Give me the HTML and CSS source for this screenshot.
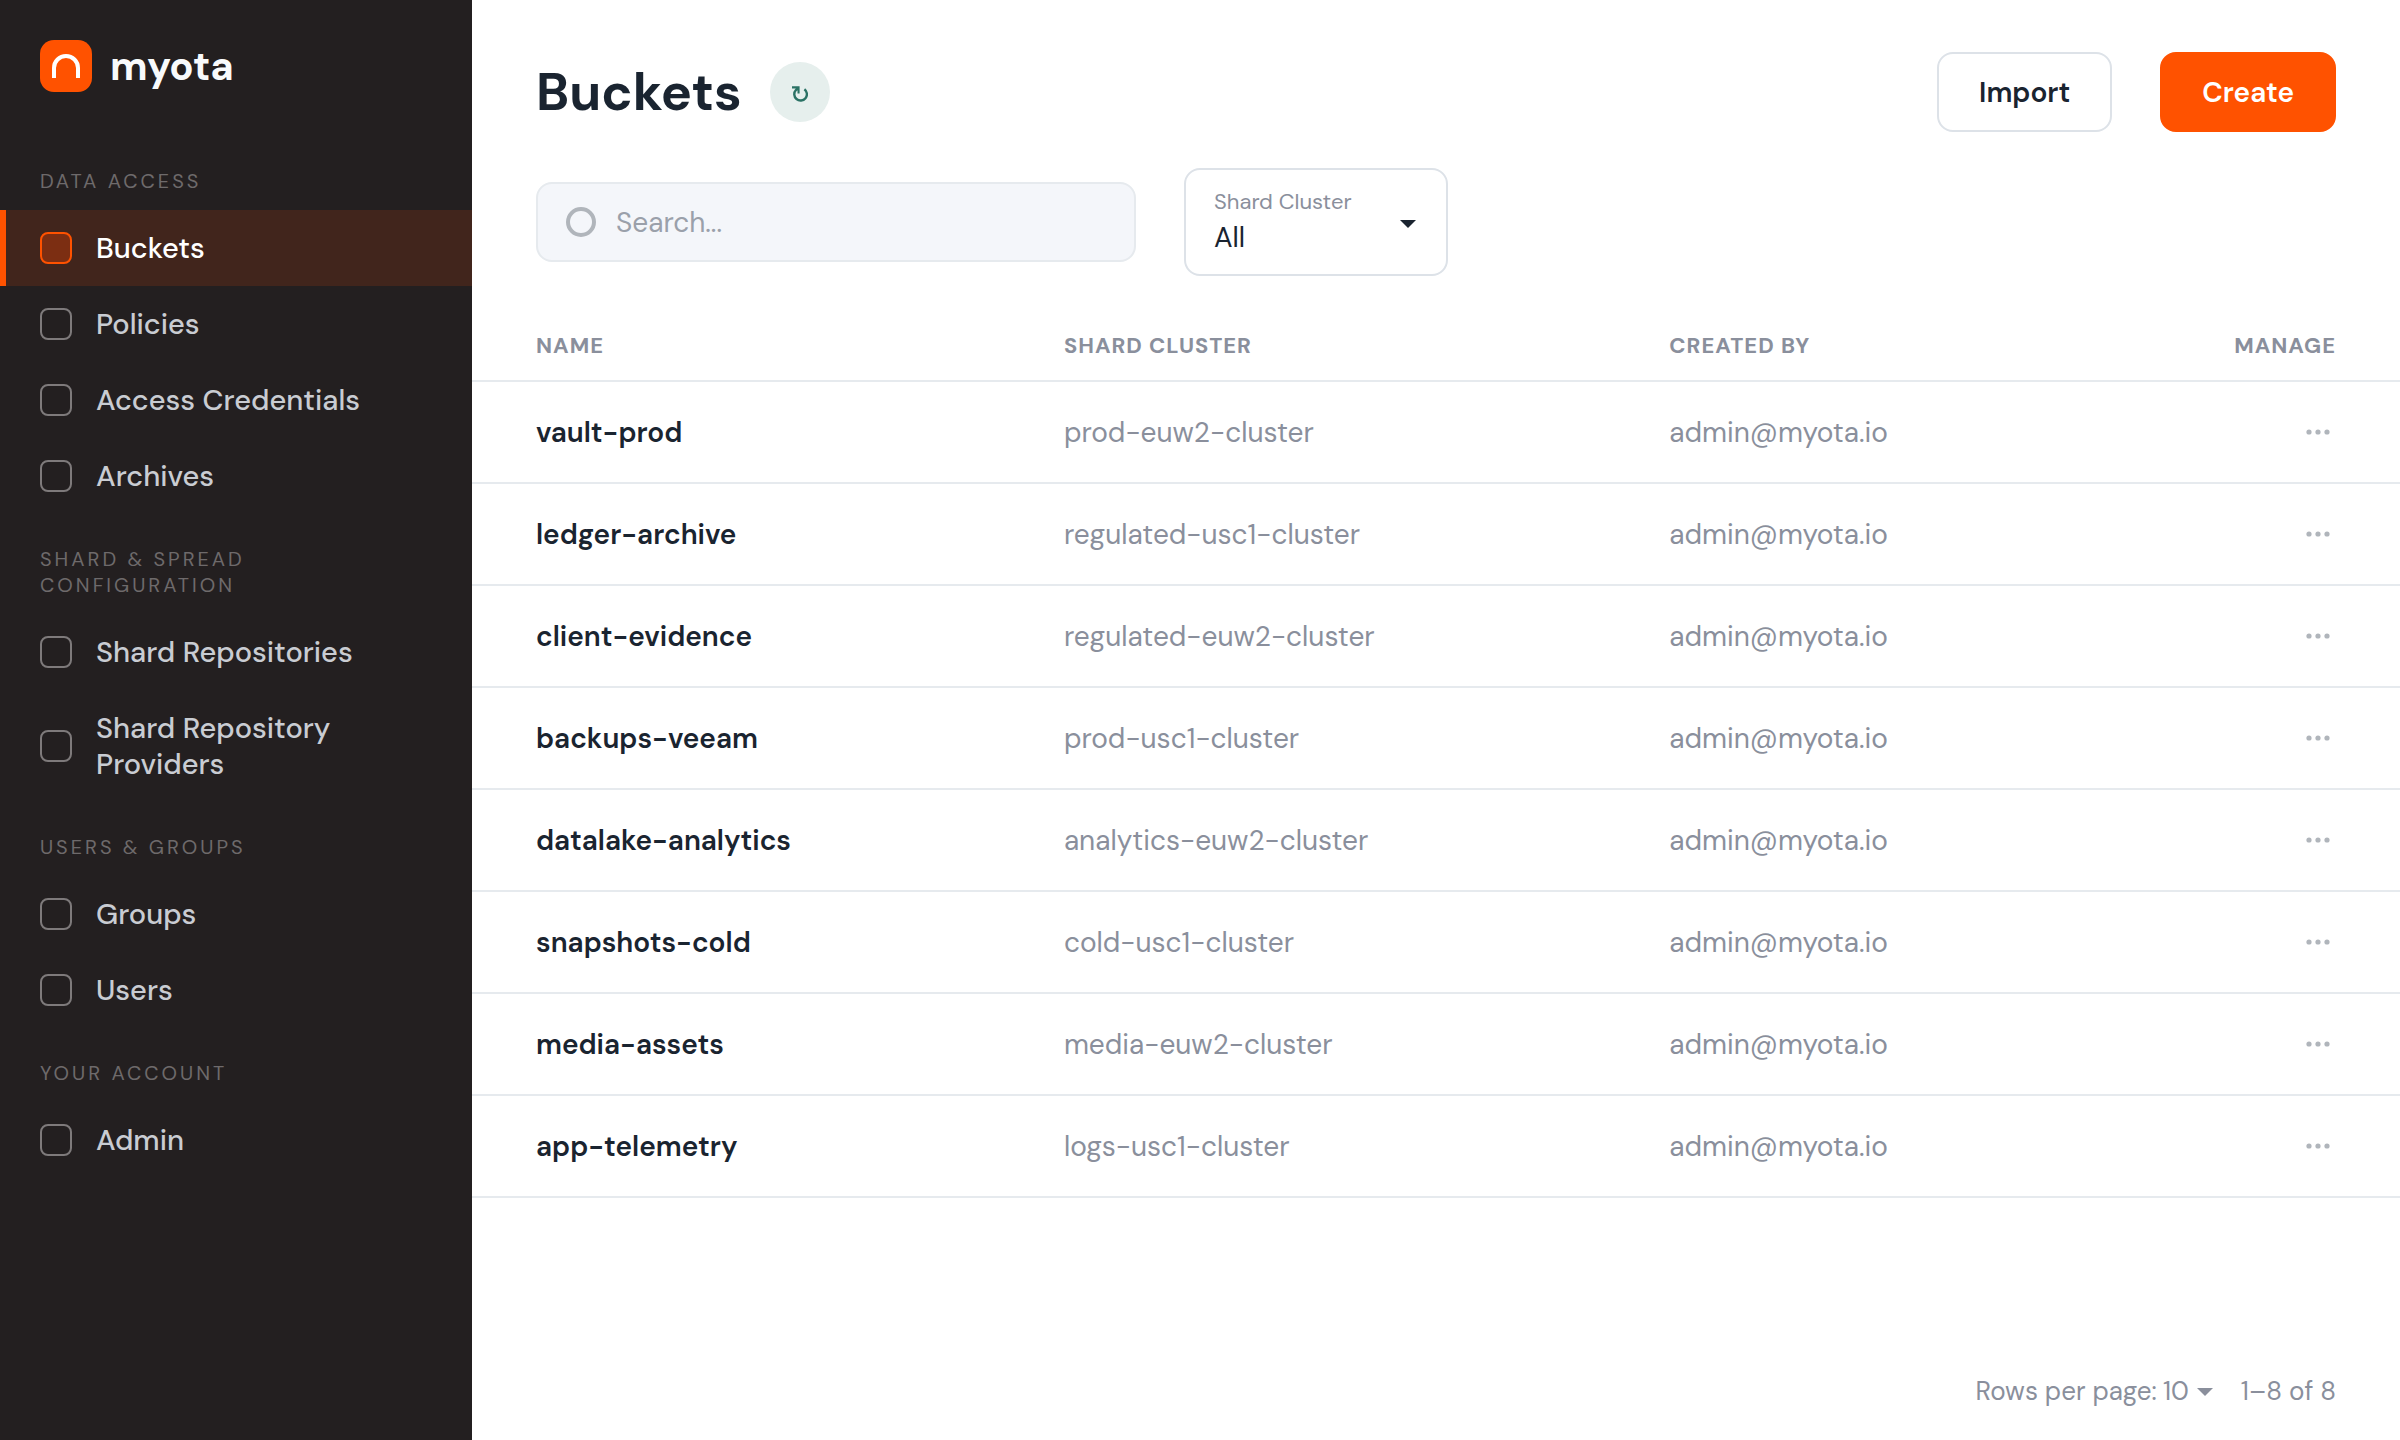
FILE: index.html
```html
<!DOCTYPE html>
<html lang="en">
<head>
  <meta charset="utf-8">
  <meta name="viewport" content="width=device-width, initial-scale=1">
  <title>Buckets – myota</title>
  <link rel="stylesheet" href="styles.css">
</head>
<body>
<div class="app">
  <aside class="sidebar">
    <a class="brand" href="#">
      <svg class="brand-mark" viewBox="0 0 52 52" aria-hidden="true">
        <rect width="52" height="52" rx="14" fill="#ff5200"/>
        <path d="M14 38V28a12 12 0 0 1 24 0v10" fill="none" stroke="#fff" stroke-width="4"/>
      </svg>
      <span class="brand-name">myota</span>
    </a>
    <nav class="nav" aria-label="Main">
      <h2 class="nav-heading">Data Access</h2>
      <a class="nav-item active" href="#" aria-current="page"><span class="nav-icon"></span><span>Buckets</span></a>
      <a class="nav-item" href="#"><span class="nav-icon"></span><span>Policies</span></a>
      <a class="nav-item" href="#"><span class="nav-icon"></span><span>Access Credentials</span></a>
      <a class="nav-item" href="#"><span class="nav-icon"></span><span>Archives</span></a>
      <h2 class="nav-heading">Shard &amp; Spread Configuration</h2>
      <a class="nav-item" href="#"><span class="nav-icon"></span><span>Shard Repositories</span></a>
      <a class="nav-item" href="#"><span class="nav-icon"></span><span>Shard Repository Providers</span></a>
      <h2 class="nav-heading">Users &amp; Groups</h2>
      <a class="nav-item" href="#"><span class="nav-icon"></span><span>Groups</span></a>
      <a class="nav-item" href="#"><span class="nav-icon"></span><span>Users</span></a>
      <h2 class="nav-heading">Your Account</h2>
      <a class="nav-item" href="#"><span class="nav-icon"></span><span>Admin</span></a>
    </nav>
  </aside>

  <main class="main">
    <header class="page-header">
      <h1 class="title">Buckets</h1>
      <button class="refresh" type="button" aria-label="Refresh">
        <svg class="refresh-icon" viewBox="0 0 16 16" aria-hidden="true">
          <path d="M12.4 3.2A6.3 6.3 0 1 1 3.9 4l2.4-2" fill="none" stroke="#2b7265" stroke-width="2.4"/>
          <path d="M0 .3h7.6v7.2H5.5V4.6L3.4 2.6H0z" fill="#2b7265"/>
        </svg>
      </button>
      <div class="actions">
        <button class="btn btn-outline" type="button">Import</button>
        <button class="btn btn-primary" type="button">Create</button>
      </div>
    </header>

    <div class="toolbar">
      <label class="search">
        <span class="search-icon"></span>
        <input class="search-input" type="search" placeholder="Search..." aria-label="Search">
      </label>
      <div class="filter">
        <label class="filter-label" for="cluster">Shard Cluster</label>
        <select class="filter-select" id="cluster"><option>All</option></select>
        <svg class="filter-caret" viewBox="0 0 16 8" aria-hidden="true"><path d="M0 0h16L8 8z" fill="#1a2430"/></svg>
      </div>
    </div>

    <table class="table">
      <thead>
        <tr><th class="col-name">Name</th><th class="col-cluster">Shard Cluster</th><th>Created By</th><th class="col-manage">Manage</th></tr>
      </thead>
      <tbody>
        <tr><td class="name">vault-prod</td><td>prod-euw2-cluster</td><td>admin@myota.io</td><td class="col-manage"><button class="more" type="button" aria-label="Manage vault-prod"><svg class="dots" viewBox="0 0 24 6"><circle cx="3" cy="3" r="2.6"/><circle cx="12" cy="3" r="2.6"/><circle cx="21" cy="3" r="2.6"/></svg></button></td></tr>
        <tr><td class="name">ledger-archive</td><td>regulated-usc1-cluster</td><td>admin@myota.io</td><td class="col-manage"><button class="more" type="button" aria-label="Manage ledger-archive"><svg class="dots" viewBox="0 0 24 6"><circle cx="3" cy="3" r="2.6"/><circle cx="12" cy="3" r="2.6"/><circle cx="21" cy="3" r="2.6"/></svg></button></td></tr>
        <tr><td class="name">client-evidence</td><td>regulated-euw2-cluster</td><td>admin@myota.io</td><td class="col-manage"><button class="more" type="button" aria-label="Manage client-evidence"><svg class="dots" viewBox="0 0 24 6"><circle cx="3" cy="3" r="2.6"/><circle cx="12" cy="3" r="2.6"/><circle cx="21" cy="3" r="2.6"/></svg></button></td></tr>
        <tr><td class="name">backups-veeam</td><td>prod-usc1-cluster</td><td>admin@myota.io</td><td class="col-manage"><button class="more" type="button" aria-label="Manage backups-veeam"><svg class="dots" viewBox="0 0 24 6"><circle cx="3" cy="3" r="2.6"/><circle cx="12" cy="3" r="2.6"/><circle cx="21" cy="3" r="2.6"/></svg></button></td></tr>
        <tr><td class="name">datalake-analytics</td><td>analytics-euw2-cluster</td><td>admin@myota.io</td><td class="col-manage"><button class="more" type="button" aria-label="Manage datalake-analytics"><svg class="dots" viewBox="0 0 24 6"><circle cx="3" cy="3" r="2.6"/><circle cx="12" cy="3" r="2.6"/><circle cx="21" cy="3" r="2.6"/></svg></button></td></tr>
        <tr><td class="name">snapshots-cold</td><td>cold-usc1-cluster</td><td>admin@myota.io</td><td class="col-manage"><button class="more" type="button" aria-label="Manage snapshots-cold"><svg class="dots" viewBox="0 0 24 6"><circle cx="3" cy="3" r="2.6"/><circle cx="12" cy="3" r="2.6"/><circle cx="21" cy="3" r="2.6"/></svg></button></td></tr>
        <tr><td class="name">media-assets</td><td>media-euw2-cluster</td><td>admin@myota.io</td><td class="col-manage"><button class="more" type="button" aria-label="Manage media-assets"><svg class="dots" viewBox="0 0 24 6"><circle cx="3" cy="3" r="2.6"/><circle cx="12" cy="3" r="2.6"/><circle cx="21" cy="3" r="2.6"/></svg></button></td></tr>
        <tr><td class="name">app-telemetry</td><td>logs-usc1-cluster</td><td>admin@myota.io</td><td class="col-manage"><button class="more" type="button" aria-label="Manage app-telemetry"><svg class="dots" viewBox="0 0 24 6"><circle cx="3" cy="3" r="2.6"/><circle cx="12" cy="3" r="2.6"/><circle cx="21" cy="3" r="2.6"/></svg></button></td></tr>
      </tbody>
    </table>

    <footer class="pager">
      <div class="page-size">
        <label for="rows">Rows per page:</label>
        <select class="page-select" id="rows"><option>10</option></select>
        <svg class="page-caret" viewBox="0 0 16 8" aria-hidden="true"><path d="M0 0h16L8 8z" fill="#8a8f9c"/></svg>
      </div>
      <span>1–8 of 8</span>
    </footer>
  </main>
</div>
</body>
</html>
```
FILE: styles.css
```css
:root {
  --ink: #1a2430;
  --muted: #8a8f9c;
  --line: #e6eaee;
  --accent: #ff5200;
}

* { box-sizing: border-box; }

body {
  margin: 0;
  background: #fff;
  color: var(--ink);
  font-family: "DM Sans", Inter, "Liberation Sans", sans-serif;
  font-size: 28px;
  line-height: 36px;
}

button, input, select { font: inherit; color: inherit; }
button { cursor: pointer; }
a { color: inherit; text-decoration: none; }

.app { display: flex; min-height: 100vh; }

/* Sidebar */
.sidebar { flex: 0 0 472px; background: #231f20; color: #c9ccd2; }
.brand { display: flex; align-items: center; gap: 18px; padding: 40px 40px 44px; }
.brand-mark { width: 52px; height: 52px; }
.brand-name { color: #f8fafc; font-size: 40px; font-weight: 700; line-height: 52px; }
.nav-heading {
  margin: 0;
  padding: 32px 160px 16px 40px;
  color: #6e6a6b;
  font-size: 20px;
  font-weight: 400;
  line-height: 26px;
  letter-spacing: 3px;
  text-transform: uppercase;
}
.nav-item {
  display: flex;
  align-items: center;
  gap: 24px;
  padding: 20px 80px 20px 34px;
  border-left: 6px solid transparent;
  font-size: 29px;
  font-weight: 500;
}
.nav-item.active { border-color: var(--accent); background: #41251c; color: #fff; }
.nav-icon { flex: none; width: 32px; height: 32px; border: 2px solid #7e7a7b; border-radius: 8px; }
.active .nav-icon { border-color: var(--accent); background: #7c2e12; }

/* Page */
.main { flex: 1; min-width: 0; display: flex; flex-direction: column; }
.page-header { display: flex; align-items: center; padding: 52px 64px 36px; }
.title { margin: 0; font-size: 52px; font-weight: 700; line-height: 64px; }
.refresh {
  display: grid;
  place-items: center;
  width: 60px;
  height: 60px;
  margin-left: 28px;
  padding: 4px 0 0;
  border: 0;
  border-radius: 50%;
  background: #e6efed;
}
.refresh-icon { width: 16px; height: 16px; }
.actions { display: flex; gap: 48px; margin-left: auto; }
.btn { height: 80px; padding: 2px 40px 0; border: 2px solid #dde2e8; border-radius: 16px; background: #fff; font-weight: 600; }
.btn-primary { border-color: var(--accent); background: var(--accent); color: #fff; }

.toolbar { display: flex; align-items: center; gap: 48px; padding: 0 64px; }
.search {
  display: flex;
  align-items: center;
  gap: 20px;
  width: 600px;
  height: 80px;
  padding: 0 28px;
  border: 2px solid var(--line);
  border-radius: 16px;
  background: #f4f6fa;
}
.search-icon { flex: none; width: 30px; height: 30px; border: 4px solid #b0b5bb; border-radius: 50%; }
.search-input { flex: 1; min-width: 0; padding: 2px 0 0; border: 0; outline: 0; background: none; }
.search-input::placeholder { color: #9aa0aa; opacity: 1; }
.filter {
  position: relative;
  width: 264px;
  padding: 16px 28px;
  border: 2px solid #dde2e8;
  border-radius: 16px;
}
.filter-label { display: block; color: var(--muted); font-size: 22px; line-height: 32px; }
.filter-select { display: block; width: 100%; height: 40px; padding: 0; border: 0; outline: 0; background: none; appearance: none; }
.filter-caret { position: absolute; top: 50px; right: 30px; width: 16px; height: 8px; pointer-events: none; }

/* Table */
.table { width: 100%; margin-top: 34px; border-collapse: separate; border-spacing: 0; table-layout: fixed; }
.table th, .table td { padding: 2px 0 0; border-bottom: 2px solid var(--line); text-align: left; color: var(--muted); }
.table th { height: 72px; font-size: 22px; font-weight: 700; letter-spacing: 1px; text-transform: uppercase; }
.table td { height: 102px; }
.table .col-name, .table .name { width: 30.7%; padding-left: 64px; }
.table .name { color: var(--ink); font-weight: 600; }
.col-cluster { width: 31.4%; }
.table .col-manage { padding-right: 64px; text-align: right; }
.more { display: inline-flex; padding: 10px 6px 16px; border: 0; background: none; vertical-align: middle; }
.dots { width: 24px; height: 6px; fill: #b0b5bb; }

/* Pager */
.pager {
  display: flex;
  justify-content: flex-end;
  gap: 28px;
  margin-top: auto;
  padding: 32px 64px;
  color: var(--muted);
  font-size: 26px;
  line-height: 34px;
}
.page-size { position: relative; display: flex; gap: 6px; }
.page-select { field-sizing: content; height: 34px; padding: 0 24px 0 0; border: 0; outline: 0; background: none; appearance: none; }
.page-caret { position: absolute; top: 14px; right: 0; width: 16px; height: 8px; pointer-events: none; }
```
